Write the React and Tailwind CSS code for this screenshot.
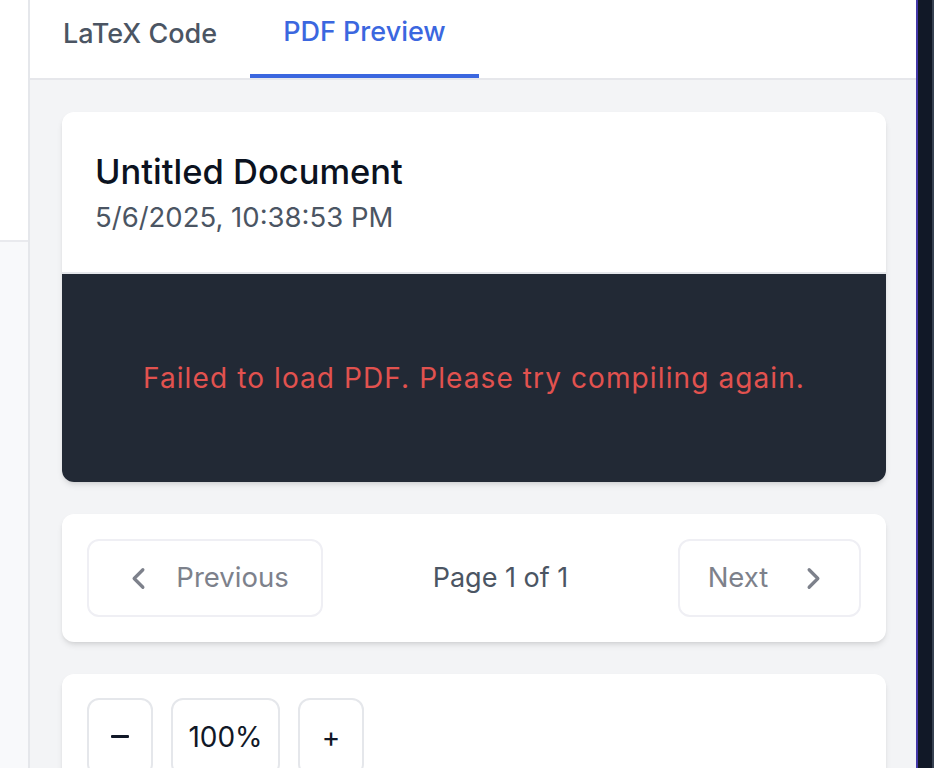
import React, { useState } from 'react';

function Chevron({ dir }) {
  return (
    <svg width="35" height="35" viewBox="0 0 24 24" fill="none" stroke="currentColor" strokeWidth="2.2" strokeLinecap="round" strokeLinejoin="round">
      {dir === 'left' ? <path d="M15 6l-6 6 6 6" /> : <path d="M9 6l6 6-6 6" />}
    </svg>
  );
}

export default function App() {
  const [tab, setTab] = useState('pdf');
  const [zoom] = useState(100);

  return (
    <div className="flex h-screen w-[934px] overflow-hidden bg-white" style={{ fontFamily: 'Inter, "Noto Sans", sans-serif' }}>
      {/* left sidebar edge */}
      <div className="flex w-[28px] shrink-0 flex-col border-r-2 border-[#e5e7eb] box-content">
        <div className="h-[242px] shrink-0 border-b-2 border-[#e9eaee] bg-white" />
        <div className="flex-1 bg-[#f8f9fb]" />
      </div>

      {/* main panel */}
      <div className="flex w-[886px] shrink-0 flex-col">
        {/* Tabs */}
        <div className="flex h-[80px] shrink-0 border-b-2 border-[#e6e7eb] bg-white">
          <button
            onClick={() => setTab('latex')}
            className={`flex h-full items-center px-[33px] pb-[10px] text-[27px] font-medium ${
              tab === 'latex' ? 'border-b-4 border-[#3b67df] text-[#3b67df]' : 'text-[#4b5563]'
            }`}
          >
            LaTeX Code
          </button>
          <button
            onClick={() => setTab('pdf')}
            className={`flex h-full items-center px-[33px] pb-[10px] text-[27px] font-medium ${
              tab === 'pdf' ? 'border-b-4 border-[#3b67df] text-[#3b67df]' : 'text-[#4b5563]'
            }`}
          >
            PDF Preview
          </button>
        </div>

        {/* Content */}
        <div className="flex flex-1 flex-col gap-[32px] bg-[#f3f4f6] pl-[32px] pr-[30px] pt-[32px]">
          {/* Document card */}
          <div className="shrink-0 overflow-hidden rounded-[12px] bg-white shadow-md">
            <div className="h-[162px] border-b-2 border-[#e5e7eb] px-[33px] pt-[40px]">
              <h2 className="text-[34.5px] font-medium leading-[40px] text-[#0b1220]">Untitled Document</h2>
              <p className="mt-[8px] text-[27.5px] leading-[34px] text-[#4b5563]">5/6/2025, 10:38:53 PM</p>
            </div>
            <div className="flex h-[208px] items-center justify-center bg-[#222935]">
              <p className="text-[28px] tracking-[1.1px] text-[#e2524f]">Failed to load PDF. Please try compiling again.</p>
            </div>
          </div>

          {/* Pagination card */}
          <div className="flex h-[128px] shrink-0 items-center justify-between rounded-[12px] bg-white px-[25px] shadow-md">
            <button className="flex h-[78px] w-[236px] items-center justify-center gap-[20px] rounded-[12px] border-2 border-[#efeff4] text-[27.5px] text-[#7d818b]">
              <Chevron dir="left" />
              <span>Previous</span>
            </button>
            <span className="text-[27px] text-[#4b5563]">Page 1 of 1</span>
            <button className="flex h-[78px] w-[183px] items-center justify-center gap-[28px] rounded-[12px] border-2 border-[#efeff4] text-[27.5px] text-[#7d818b]">
              <span>Next</span>
              <Chevron dir="right" />
            </button>
          </div>

          {/* Zoom card */}
          <div className="flex h-[127px] shrink-0 items-start gap-[18px] rounded-[12px] bg-white px-[25px] pt-[24px] shadow-md">
            <button className="flex h-[78px] w-[66px] items-center justify-center rounded-[12px] border-2 border-[#e5e7eb] text-[#111827]">
              <svg width="18" height="4" viewBox="0 0 18 4"><rect width="18" height="3" rx="1" fill="currentColor" /></svg>
            </button>
            <button className="flex h-[78px] w-[109px] items-center justify-center rounded-[12px] border-2 border-[#e5e7eb] text-[28px] text-[#111827]">{zoom}%</button>
            <button className="flex h-[78px] w-[66px] items-center justify-center rounded-[12px] border-2 border-[#e5e7eb] text-[28px] text-[#111827]">+</button>
          </div>
        </div>
      </div>

      {/* right edge */}
      <div className="w-[2px] shrink-0 bg-[#4338a8]" />
      <div className="w-[14px] shrink-0 bg-[#111827]" />
      <div className="w-[2px] shrink-0 bg-[#374151]" />
    </div>
  );
}
